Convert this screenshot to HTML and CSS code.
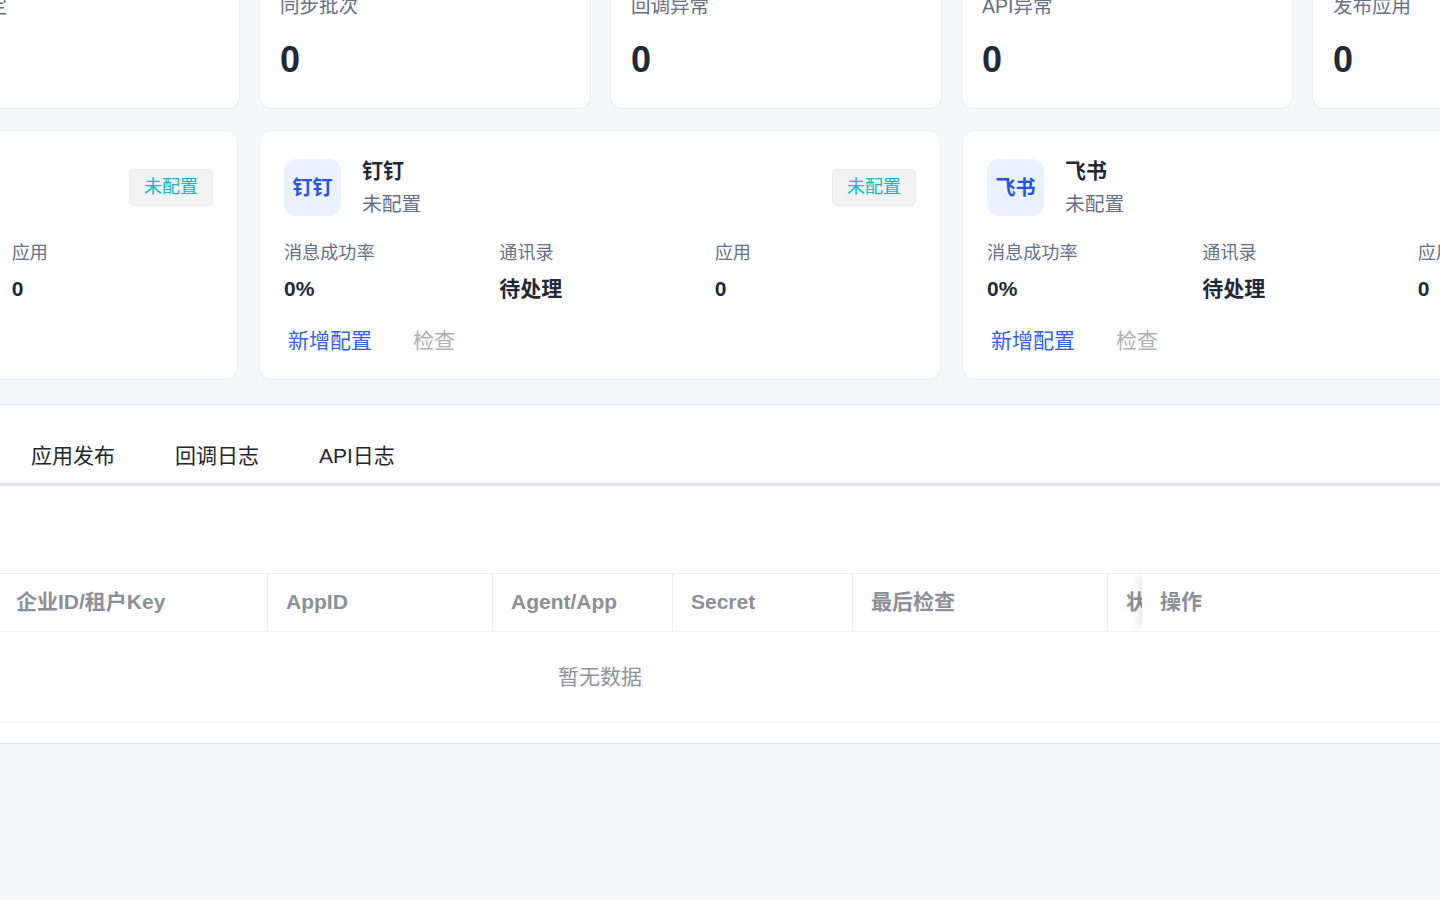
FILE: index.html
```html
<!DOCTYPE html>
<html lang="zh-CN">
<head>
  <meta charset="UTF-8">
  <meta name="viewport" content="width=device-width, initial-scale=1.0">
  <title>配置</title>
  <link rel="stylesheet" href="styles.css">
</head>
<body>
  <div class="page">
    <!-- Stats -->
    <section class="stats">
      <div class="stat-card"><span>用户绑定</span></div>
      <div class="stat-card"><span>同步批次</span><strong>0</strong></div>
      <div class="stat-card"><span>回调异常</span><strong>0</strong></div>
      <div class="stat-card"><span>API异常</span><strong>0</strong></div>
      <div class="stat-card"><span>发布应用</span><strong>0</strong></div>
    </section>

    <!-- Channels -->
    <section class="channels">
      <article class="channel-card">
        <div class="channel-head">
          <span class="tag">未配置</span>
        </div>
        <div class="metrics">
          <div class="metric last"><span>应用</span><strong>0</strong></div>
        </div>
      </article>

      <article class="channel-card">
        <div class="channel-head">
          <div class="logo">钉钉</div>
          <div class="channel-name">
            <h3>钉钉</h3>
            <p>未配置</p>
          </div>
          <span class="tag">未配置</span>
        </div>
        <div class="metrics">
          <div class="metric"><span>消息成功率</span><strong>0%</strong></div>
          <div class="metric"><span>通讯录</span><strong>待处理</strong></div>
          <div class="metric"><span>应用</span><strong>0</strong></div>
        </div>
        <div class="actions">
          <button class="link">新增配置</button>
          <button class="link" disabled>检查</button>
        </div>
      </article>

      <article class="channel-card">
        <div class="channel-head">
          <div class="logo">飞书</div>
          <div class="channel-name">
            <h3>飞书</h3>
            <p>未配置</p>
          </div>
        </div>
        <div class="metrics">
          <div class="metric"><span>消息成功率</span><strong>0%</strong></div>
          <div class="metric"><span>通讯录</span><strong>待处理</strong></div>
          <div class="metric"><span>应用</span><strong>0</strong></div>
        </div>
        <div class="actions">
          <button class="link">新增配置</button>
          <button class="link" disabled>检查</button>
        </div>
      </article>
    </section>

    <!-- Tabs and table -->
    <section class="panel">
      <nav class="tabs">
        <a class="tab">应用发布</a>
        <a class="tab">回调日志</a>
        <a class="tab">API日志</a>
      </nav>
      <div class="table">
        <div class="table-head">
          <div class="th">企业ID/租户Key</div>
          <div class="th">AppID</div>
          <div class="th">Agent/App</div>
          <div class="th">Secret</div>
          <div class="th">最后检查</div>
          <div class="th">状</div>
          <div class="th fixed">操作</div>
        </div>
        <div class="table-body">
          <div class="table-empty">暂无数据</div>
        </div>
      </div>
    </section>
  </div>
</body>
</html>
```
FILE: styles.css
```css
* {
  box-sizing: border-box;
  margin: 0;
  padding: 0;
}

body {
  font-family: "Liberation Sans", "Noto Sans CJK SC", sans-serif;
  font-size: 21px;
  background-color: #f6f8fc;
  color: #1f2937;
  overflow: hidden;
}

.page {
  width: 1440px;
  height: 900px;
  overflow: hidden;
}

/* Stats */
.stats {
  display: flex;
  gap: 19px;
  width: 2000px;
  height: 109px;
  margin-left: -92.5px;
}

.stat-card {
  display: flex;
  flex-direction: column;
  justify-content: flex-end;
  flex: none;
  width: 332px;
  height: 109px;
  padding: 0 20.5px 26px;
  background-color: #fff;
  border: 1px solid #e9edf4;
  border-top: none;
  border-radius: 0 0 12px 12px;
}

.stat-card span {
  font-size: 19.5px;
  line-height: 30px;
  color: #667085;
}

.stat-card strong {
  margin-top: 17px;
  font-size: 36px;
  line-height: 44px;
}

.stat-card:first-child {
  padding-bottom: 87px;
}

/* Channels */
.channels {
  display: flex;
  gap: 21px;
  width: 2200px;
  margin: 21px 0 24px -444px;
}

.channel-card {
  flex: none;
  width: 682px;
  height: 250px;
  padding: 28px 24px 0 24px;
  background-color: #fff;
  border: 1px solid #e9edf4;
  border-radius: 12px;
}

.channel-head {
  display: flex;
  align-items: center;
  height: 57px;
}

.logo {
  width: 57px;
  height: 57px;
  line-height: 58px;
  text-align: center;
  font-size: 20px;
  font-weight: bold;
  color: #2454e6;
  background-color: #eaf2ff;
  border-radius: 12px;
}

.channel-name {
  margin-left: 21px;
  padding-bottom: 2px;
}

.channel-name h3 {
  font-size: 21px;
  line-height: 34px;
}

.channel-name p {
  font-size: 19.8px;
  line-height: 32px;
  color: #667085;
}

.tag {
  margin-left: auto;
  width: 84px;
  height: 37px;
  line-height: 34px;
  text-align: center;
  font-size: 18px;
  color: #13b5c4;
  background-color: #f3f3f4;
  border: 1px solid #ececee;
  border-radius: 5px;
}

.metrics {
  display: grid;
  grid-template-columns: repeat(3, 1fr);
  gap: 14px;
  margin-top: 22px;
}

.metric.last {
  grid-column: 3;
}

.metric span,
.metric strong {
  display: block;
}

.metric span {
  font-size: 18.1px;
  line-height: 30px;
  color: #667085;
}

.metric strong {
  margin-top: 3px;
  font-size: 21px;
  line-height: 36px;
}

.actions {
  display: flex;
  gap: 41px;
  margin-top: 17px;
  padding-left: 4px;
}

.link {
  font: inherit;
  line-height: 34px;
  color: #2f62e8;
  background: none;
  border: none;
  cursor: pointer;
}

.link:disabled {
  color: #adb0b5;
  cursor: default;
}

/* Tabs and table */
.panel {
  height: 340px;
  background-color: #fff;
  border-top: 1px solid #e6e8ee;
  border-bottom: 1px solid #e3e6eb;
}

.tabs {
  display: flex;
  gap: 60px;
  height: 81px;
  padding: 34px 0 0 31px;
  border-bottom: 3px solid #e2e4ec;
}

.tab {
  line-height: 34px;
  color: #22262e;
}

.table {
  margin-top: 87px;
  border-top: 1px solid #ebebed;
}

.table-head {
  display: grid;
  grid-template-columns: 268px 225px 180px 180px 255px 34px 1fr;
  height: 58px;
  border-bottom: 1px solid #f4f4f5;
}

.th {
  padding-left: 18px;
  line-height: 56px;
  font-weight: bold;
  color: #8c8f96;
  white-space: nowrap;
  overflow: hidden;
  border-right: 1px solid #ececee;
}

.th:first-child {
  padding-left: 16px;
}

.th:nth-child(6) {
  border-right: none;
}

/* pinned column */
.th.fixed {
  overflow: visible;
  border-right: none;
  background-color: #fff;
  box-shadow: -5px 0 10px -3px rgba(0, 0, 0, 0.12);
  clip-path: inset(0 0 0 -15px);
}

.table-body {
  border-bottom: 1px solid #f4f4f5;
}

.table-empty {
  width: 1200px;
  height: 90px;
  line-height: 90px;
  text-align: center;
  color: #909399;
}
```
